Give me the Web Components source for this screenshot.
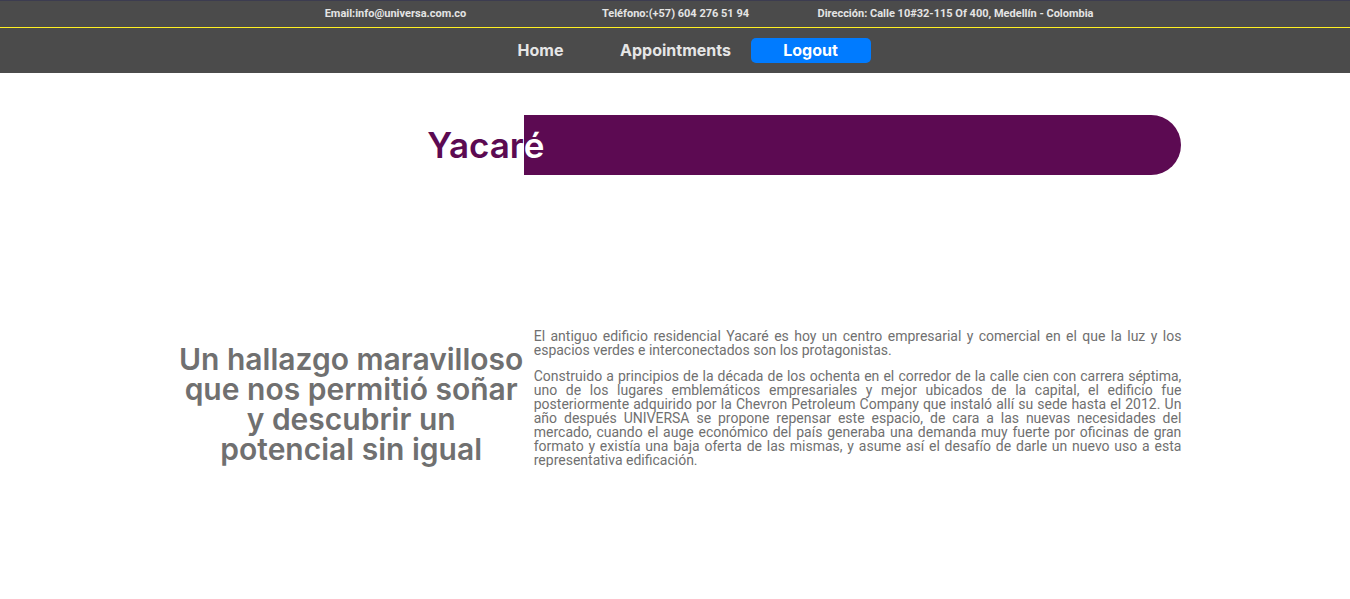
<!DOCTYPE html>
<html lang="es">
<head>
<meta charset="utf-8">
<meta name="viewport" content="width=device-width, initial-scale=1">
<title>Universa - Yacaré</title>
<style>
  body { margin: 0; background: #fff; color: #707070; font-family: Roboto, "Liberation Sans", sans-serif; }
  main { padding-left: 1px; }
</style>
</head>
<body>
<contact-bar>
  <contact-item>Email:info@universa.com.co</contact-item>
  <contact-item>Teléfono:(+57) 604 276 51 94</contact-item>
  <contact-item>Dirección: Calle 10#32-115 Of 400, Medellín - Colombia</contact-item>
</contact-bar>
<site-nav>
  <nav-link href="#home">Home</nav-link>
  <nav-link href="#appointments">Appointments</nav-link>
  <logout-button>Logout</logout-button>
</site-nav>
<main>
  <project-title><span slot="outside">Yacar</span><span slot="inside">é</span></project-title>
  <project-story>
    <span slot="heading">Un hallazgo maravilloso que nos permitió soñar y descubrir un potencial sin igual</span>
    <story-paragraph>El antiguo edificio residencial Yacaré es hoy un centro empresarial y comercial en el que la luz y los espacios verdes e interconectados son los protagonistas.</story-paragraph>
    <story-paragraph>Construido a principios de la década de los ochenta en el corredor de la calle cien con carrera séptima, uno de los lugares emblemáticos empresariales y mejor ubicados de la capital, el edificio fue posteriormente adquirido por la Chevron Petroleum Company que instaló allí su sede hasta el 2012. Un año después UNIVERSA se propone repensar este espacio, de cara a las nuevas necesidades del mercado, cuando el auge económico del país generaba una demanda muy fuerte por oficinas de gran formato y existía una baja oferta de las mismas, y asume así el desafío de darle un nuevo uso a esta representativa edificación.</story-paragraph>
  </project-story>
</main>
<script>
  function define(name, markup, setup) {
    const template = document.createElement('template');
    template.innerHTML = markup;
    customElements.define(name, class extends HTMLElement {
      constructor() {
        super();
        this.attachShadow({ mode: 'open' }).append(template.content.cloneNode(true));
      }
      connectedCallback() {
        if (setup) setup(this);
      }
    });
  }

  define('contact-bar', `
    <style>
      :host { display: block; background: #4b4b4b; border-top: 1px solid #3c3c50; border-bottom: 1px solid #fff022; }
      div { display: grid; grid-template-columns: repeat(3, minmax(0, 280px)); justify-content: center; padding: 5px 0 5px 1px; }
    </style>
    <div><slot></slot></div>`);

  define('contact-item', `
    <style>
      :host { display: block; text-align: center; color: #e4e4e4; font-size: 11px; font-weight: 700; line-height: 16px; }
    </style>
    <slot></slot>`);

  define('site-nav', `
    <style>
      :host { display: block; background: #4b4b4b; }
      nav { display: flex; justify-content: center; gap: 15px; padding: 10px 0 10px 1px; }
    </style>
    <nav><slot></slot></nav>`);

  define('nav-link', `
    <style>
      :host { display: block; width: 120px; text-align: center; font: 700 16px/25px Inter, "Liberation Sans", sans-serif; }
      a { color: #e6e6e6; text-decoration: none; }
    </style>
    <a><slot></slot></a>`,
    el => { el.shadowRoot.querySelector('a').href = el.getAttribute('href'); });

  define('logout-button', `
    <style>
      :host { display: block; width: 120px; }
      button { display: block; width: 100%; padding: 0; border: 0; border-radius: 5px; background: #007bff; color: #fff; font: 700 16px/25px Inter, "Liberation Sans", sans-serif; cursor: pointer; }
    </style>
    <button type="button"><slot></slot></button>`);

  define('project-title', `
    <style>
      :host { display: block; width: 75%; margin: 42px auto 0; }
      h1 { display: grid; grid-template-columns: 35% 65%; margin: 0; font: 600 35px/60px Inter, "Liberation Sans", sans-serif; }
      .outside { color: #5c0a52; text-align: right; }
      .inside { color: #fff; background: #5c0a52; border-radius: 0 30px 30px 0; }
    </style>
    <h1><span class="outside"><slot name="outside"></slot></span><span class="inside"><slot name="inside"></slot></span></h1>`);

  define('project-story', `
    <style>
      :host { display: grid; grid-template-columns: 35% 65%; width: 75%; margin: 154px auto 0; }
      h2 { margin: 0; padding: 15px 0 0 9px; text-align: center; font: 600 30px/30px Inter, "Liberation Sans", sans-serif; }
      div { display: flex; flex-direction: column; gap: 12px; padding-left: 10px; }
    </style>
    <h2><slot name="heading"></slot></h2>
    <div><slot></slot></div>`);

  define('story-paragraph', `
    <style>
      :host { display: block; }
      p { margin: 0; font-size: 14px; line-height: 14px; text-align: justify; }
    </style>
    <p><slot></slot></p>`);
</script>
</body>
</html>
